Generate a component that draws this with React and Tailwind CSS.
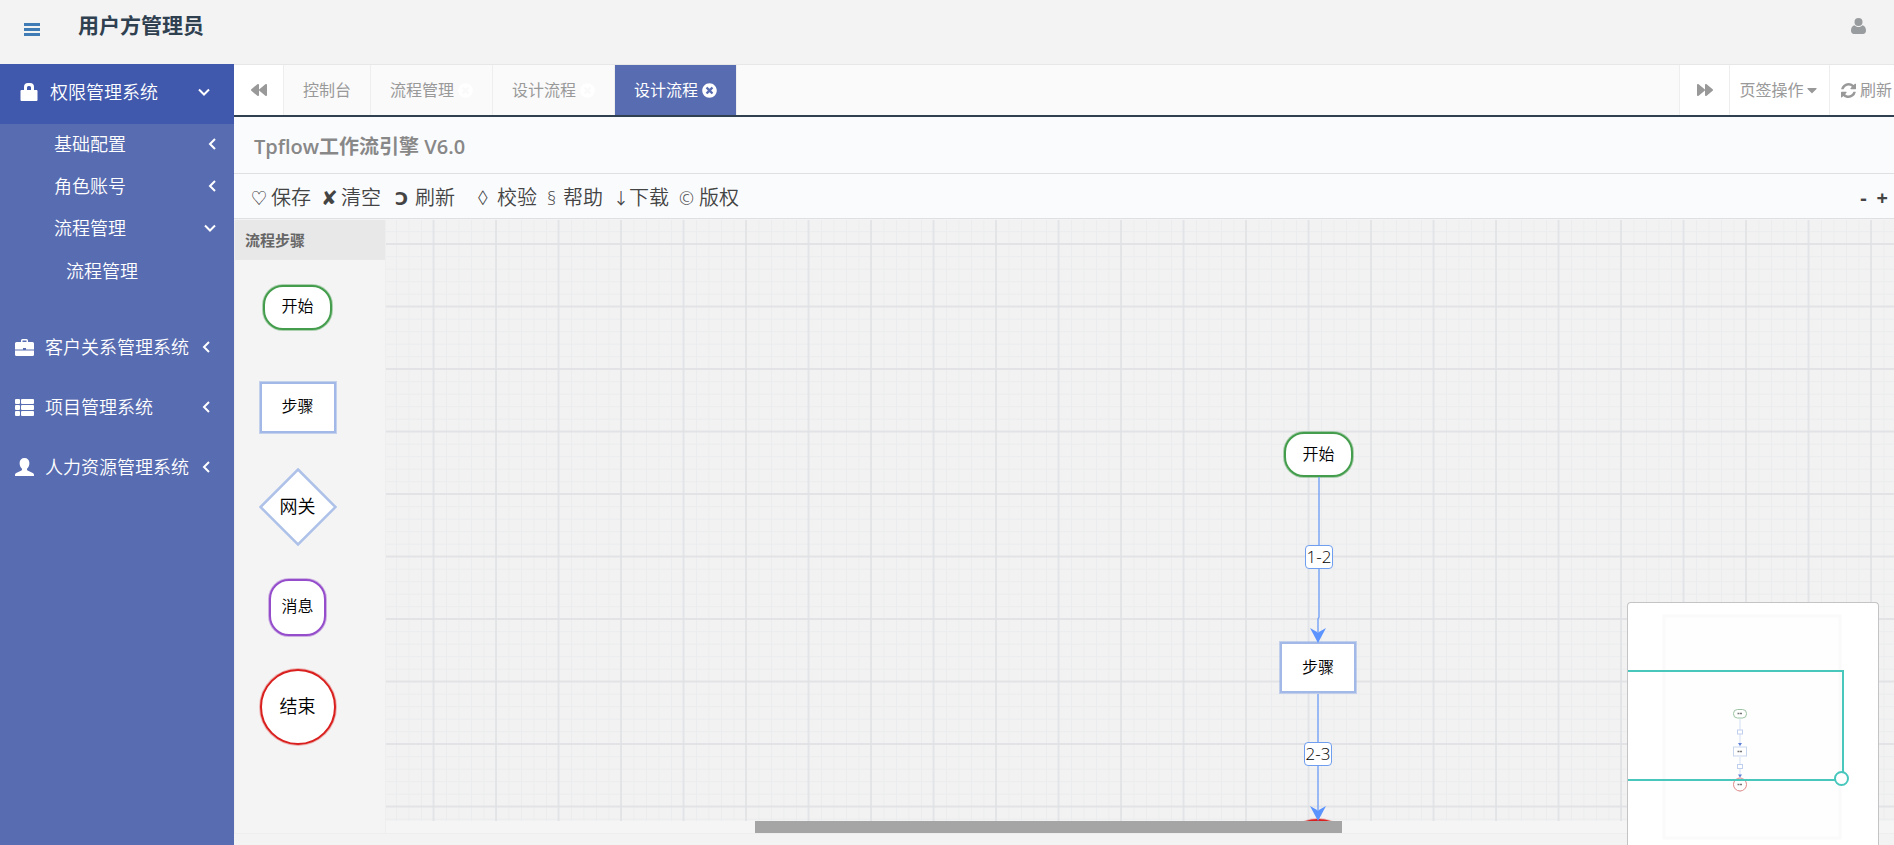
import React, { useState } from 'react';
import { FaBackward, FaForward, FaCaretDown, FaTimesCircle } from 'react-icons/fa';

const SUB_MENU = [
  { label: '基础配置', open: false },
  { label: '角色账号', open: false },
  { label: '流程管理', open: true, children: ['流程管理'] },
];

const SYSTEMS = [
  { label: '客户关系管理系统', icon: BriefcaseIcon },
  { label: '项目管理系统', icon: ListIcon },
  { label: '人力资源管理系统', icon: PersonIcon },
];

const TABS = [
  { id: 'home', label: '控制台' },
  { id: 'flow', label: '流程管理', closable: true },
  { id: 'design-1', label: '设计流程', closable: true },
  { id: 'design-2', label: '设计流程', closable: true },
];

const TOOLS = [
  { glyph: '♡', label: '保存', glyphClass: 'w-5 text-base' },
  { glyph: '✘', label: '清空', glyphClass: 'w-5 text-xl' },
  { glyph: 'Ↄ', label: '刷新', glyphClass: 'w-6 pl-1 text-lg font-bold', extra: 'mr-3' },
  { glyph: '◊', label: '校验', glyphClass: 'w-5 text-xl' },
  { glyph: '§', label: '帮助', glyphClass: 'w-4 text-lg' },
  { glyph: '↓', label: '下载', glyphClass: 'w-4 text-base' },
  { glyph: '©', label: '版权', glyphClass: 'w-5 text-lg' },
];

function LockIcon() {
  return (
    <svg width="18" height="18" viewBox="0 0 18 18" fill="currentColor">
      <path d="M4 7V4a4 4 0 0 1 4-4h2a4 4 0 0 1 4 4v3h2.500a1 1 0 0 1 1 1v9a1 1 0 0 1-1 1h-15a1 1 0 0 1-1-1V8a1 1 0 0 1 1-1zM7 7h4V4.500A1.500 1.500 0 0 0 9.500 3h-1A1.500 1.500 0 0 0 7 4.500z" />
    </svg>
  );
}

function BriefcaseIcon() {
  return (
    <svg width="19" height="17" viewBox="0 0 19 17" fill="currentColor">
      <path d="M6 3V1.500A1.500 1.500 0 0 1 7.500 0h4A1.500 1.500 0 0 1 13 1.500V3h4.500A1.500 1.500 0 0 1 19 4.500V10.500h-8V9H8v1.500H0v-6A1.500 1.500 0 0 1 1.500 3zM7.500 3h4V1.500h-4z" />
      <path d="M0 11.500h19v4a1.500 1.500 0 0 1-1.500 1.500h-16A1.500 1.500 0 0 1 0 15.500z" />
    </svg>
  );
}

function ListIcon() {
  return (
    <svg width="19" height="17" viewBox="0 0 19 17" fill="currentColor">
      {[0, 6, 12].map(y => (
        <React.Fragment key={y}>
          <rect x="0" y={y} width="5" height="5" rx="1" />
          <rect x="6" y={y} width="13" height="5" rx="1" />
        </React.Fragment>
      ))}
    </svg>
  );
}

function PersonIcon() {
  return (
    <svg width="19" height="18" viewBox="0 0 19 18" fill="currentColor">
      <path d="M9.500 0c3 0 4.900 2 4.900 5 0 2.400-.9 4.400-2.200 5.500-.4.500-.3 1.500.3 1.900l5.300 2.500c.8.400 1.200 1 1.200 1.800V18H0v-1.300c0-.8.4-1.400 1.200-1.800l5.300-2.500c.6-.4.700-1.400.3-1.900C5.500 9.400 4.600 7.400 4.600 5c0-3 1.900-5 4.900-5z" />
    </svg>
  );
}

function Chevron({ open }) {
  return (
    <svg width="12" height="12" viewBox="0 0 12 12" fill="none" stroke="currentColor" strokeWidth="2">
      <path d={open ? 'M1 3.500 6 8.500 11 3.500' : 'M9 1 4 6 9 11'} />
    </svg>
  );
}

function RefreshIcon() {
  return (
    <svg width="15" height="15" viewBox="0 0 1536 1536" fill="currentColor">
      <path d="M1511 928q0 5-1 7-64 268-268 434.500T764 1536q-146 0-282.500-55T238 1324l-129 129q-19 19-45 19t-45-19-19-45V960q0-26 19-45t45-19h448q26 0 45 19t19 45-19 45l-137 137q71 66 161 102t187 36q134 0 250-65t186-179q11-17 53-117 8-23 30-23h192q13 0 22.500 9.500t9.500 22.500zm25-800v448q0 26-19 45t-45 19h-448q-26 0-45-19t-19-45 19-45l138-138Q969 256 768 256q-134 0-250 65T332 500q-11 17-53 117-8 23-30 23H50q-13 0-22.500-9.500T18 608v-7q65-268 270-434.500T768 0q146 0 284 55.500T1297 212l130-129q19-19 45-19t45 19 19 45z" />
    </svg>
  );
}

function Sidebar() {
  return (
    <nav className="w-[234px] shrink-0 bg-[#586cb1] text-lg font-[350] text-white">
      <a href="#auth" className="flex h-[60px] items-center bg-[#4159ad] pr-6 pb-1 pl-5">
        <LockIcon />
        <span className="ml-3 flex-1">权限管理系统</span>
        <Chevron open />
      </a>
      <ul className="mb-[25px]">
        {SUB_MENU.map(item => (
          <li key={item.label}>
            <a href="#sub" className={`flex h-[42px] items-center pb-0.5 pl-[54px] ${item.open ? 'pr-[18px]' : 'pr-4'}`}>
              <span className="flex-1">{item.label}</span>
              <Chevron open={item.open} />
            </a>
            {item.children?.map(child => (
              <a key={child} href="#child" className="flex h-[42px] items-center pl-[66px]">{child}</a>
            ))}
          </li>
        ))}
      </ul>
      {SYSTEMS.map(({ label, icon: Icon }) => (
        <a key={label} href="#system" className="flex h-[60px] items-center pr-[22px] pl-[15px]">
          <Icon />
          <span className="ml-[11px] flex-1 whitespace-nowrap">{label}</span>
          <Chevron />
        </a>
      ))}
    </nav>
  );
}

function TabBar() {
  const [active, setActive] = useState('design-2');

  return (
    <div className="flex h-[53px] overflow-hidden border-t border-b-2 border-t-[#e7e7e7] border-b-[#2f4050] bg-[#fafafa] text-base text-[#999]">
      <button aria-label="向左" className="flex w-[50px] shrink-0 items-center justify-center border-r border-[#eee] bg-white">
        <FaBackward size={16} />
      </button>
      {TABS.map(tab => (
        <button key={tab.id} onClick={() => setActive(tab.id)}
          className={`flex shrink-0 items-center gap-1 border-r border-[#eee] px-[19px] ${active === tab.id ? 'bg-[#586cb1] text-white' : ''}`}>
          {tab.label}
          {tab.closable && <FaTimesCircle size={15} className="text-white" />}
        </button>
      ))}
      <div className="flex-1" />
      <button aria-label="向右" className="flex w-[51px] shrink-0 items-center justify-center border-x border-[#eee] bg-white">
        <FaForward size={16} />
      </button>
      <button className="flex w-[100px] shrink-0 items-center justify-center border-r border-[#eee] bg-white whitespace-nowrap">
        页签操作
        <FaCaretDown size={16} />
      </button>
      <button className="flex w-16 shrink-0 items-center gap-1 bg-white pl-[11px] whitespace-nowrap">
        <RefreshIcon />
        刷新
      </button>
    </div>
  );
}

function Toolbar() {
  return (
    <div className="flex h-[45px] items-center border-b border-[#dee0e3] bg-[#fafbfd] pt-1 pr-1.5 pl-[17px] text-xl text-[#444]">
      <div className="flex gap-2.5 font-[350]">
        {TOOLS.map(tool => (
          <button key={tool.label} className={`flex items-center whitespace-nowrap ${tool.extra || ''}`}>
            <span className={`text-left ${tool.glyphClass}`}>{tool.glyph}</span>
            {tool.label}
          </button>
        ))}
      </div>
      <div className="ml-auto flex gap-2.5 font-bold">
        <button>-</button>
        <button>+</button>
      </div>
    </div>
  );
}

function StartNode() {
  return (
    <div className="flex h-[45px] w-[69px] items-center justify-center rounded-[20px] border-2 border-[#449d4c] bg-white pb-0.5 ring-1 ring-[#449d4c]/40">开始</div>
  );
}

function StepNode() {
  return (
    <div className="flex h-[51px] w-[76px] items-center justify-center border-2 border-[#a2b9e8] bg-white pb-0.5 ring-1 ring-[#a2b9e8]/60">步骤</div>
  );
}

function GatewayNode() {
  return (
    <div className="relative flex size-[78px] items-center justify-center pb-0.5 text-lg">
      <svg className="absolute inset-0" width="78" height="78" viewBox="0 0 78 78">
        <path d="M39 1.500 76.500 39 39 76.500 1.500 39z" fill="#fff" stroke="#adc1e9" strokeWidth="2.500" />
      </svg>
      <span className="relative">网关</span>
    </div>
  );
}

function MessageNode() {
  return (
    <div className="flex size-[57px] items-center justify-center rounded-[20px] border-2 border-[#954dcb] bg-white pb-0.5 ring-1 ring-[#954dcb]/40">消息</div>
  );
}

function EndNode({ label }) {
  return (
    <div className="flex size-[76px] items-center justify-center rounded-full border-2 border-[#d9201e] bg-white pb-0.5 text-lg ring-1 ring-[#d9201e]/30">{label}</div>
  );
}

function Palette() {
  return (
    <aside className="w-[152px] shrink-0 border-x border-[#eee] bg-[#f4f4f4] text-base font-[350] text-black">
      <h2 className="flex h-10 items-center bg-[#e8e8e8] px-2.5 text-[15px] font-bold text-[#666]">流程步骤</h2>
      <ul className="-mt-[3px] w-[125px]">
        <li className="flex h-[100px] items-center justify-center"><StartNode /></li>
        <li className="flex h-[100px] items-center justify-center"><StepNode /></li>
        <li className="flex h-[100px] items-center justify-center"><GatewayNode /></li>
        <li className="flex h-[100px] items-center justify-center"><MessageNode /></li>
        <li className="flex h-[100px] items-center justify-center"><EndNode label="结束" /></li>
      </ul>
    </aside>
  );
}

function Grid() {
  return (
    <svg className="absolute inset-0 size-full">
      <defs>
        <pattern id="minor" width="12.5" height="12.5" x="47.5" y="23.7" patternUnits="userSpaceOnUse">
          <path d="M0 .5H12.5M.5 0V12.5" stroke="#ebecee" strokeWidth="1" />
        </pattern>
        <pattern id="major" width="62.5" height="62.5" x="46.500" y="23" patternUnits="userSpaceOnUse">
          <path d="M0 1H62.5M1 0V62.5" stroke="#dfe0e3" strokeWidth="1.400" />
        </pattern>
      </defs>
      <rect width="100%" height="100%" fill="url(#minor)" />
      <rect width="100%" height="100%" fill="url(#major)" />
    </svg>
  );
}

function Canvas() {
  return (
    <div className="relative flex-1 overflow-hidden bg-[#f2f2f2] text-base font-[350] text-black">
      <Grid />
      <div className="absolute top-[212px] left-[898px]"><StartNode /></div>
      <div className="absolute top-[422px] left-[894px]"><StepNode /></div>
      <div className="absolute top-[599px] left-[894px]"><EndNode /></div>
      <svg className="absolute top-0 left-[900px]" width="64" height="620" fill="none">
        <path d="M33 257V397L32 399V412M32 474V590" stroke="#7ba6f5" strokeWidth="1.500" />
        <path d="M24 408 32 412.500 40 408 32 423zM24 586 32 590.500 40 586 32 601z" fill="#5c94ff" />
      </svg>
      <span className="absolute top-[325px] left-[919px] flex h-6 w-7 items-center justify-center rounded-sm border border-[#6f9df0] bg-white text-[17px] whitespace-nowrap">1-2</span>
      <span className="absolute top-[522px] left-[918px] flex h-6 w-7 items-center justify-center rounded-sm border border-[#6f9df0] bg-white text-[17px] whitespace-nowrap">2-3</span>
    </div>
  );
}

function MiniMap() {
  return (
    <div className="absolute right-[15px] bottom-0 h-[243px] w-[252px] overflow-hidden rounded-t border border-b-0 border-[#c4c4c6] bg-white">
      <svg width="250" height="242" viewBox="0 0 250 242" fill="none">
        <rect x="36" y="13" width="176" height="222" fill="#fefefe" stroke="#fafafa" strokeWidth="3" />
        <path d="M112 116V146M112 154V189" stroke="#d5e0f5" />
        <path d="M110 140h4l-2 3zM110 171.500h4l-2 3z" fill="#5c80d8" />
        <rect x="105.500" y="106.500" width="13" height="8.500" rx="4" fill="#fff" stroke="#9cc4a2" />
        <rect x="105.500" y="144" width="13" height="9" fill="#fff" stroke="#c9d5ed" />
        <rect x="109.500" y="127" width="5" height="4" fill="#fff" stroke="#c0cfee" />
        <rect x="109.500" y="161.500" width="5" height="4" fill="#fff" stroke="#c0cfee" />
        <circle cx="112" cy="181.500" r="6.500" fill="#fff" stroke="#e08a88" />
        <path d="M109.500 110.500h5M109.500 148.500h5M109.500 181.500h5" stroke="#777" strokeWidth="1.500" strokeDasharray="2 .5" />
        <path d="M0 68H215V177H0" stroke="#48c7bd" strokeWidth="2" />
        <circle cx="213.500" cy="175.500" r="6.500" fill="#fff" stroke="#48c7bd" strokeWidth="2" />
      </svg>
    </div>
  );
}

export default function App() {
  return (
    <div className="flex h-screen flex-col overflow-hidden bg-[#f3f3f3] font-['Open_Sans','Noto_Sans_CJK_SC','DejaVu_Sans',sans-serif]">
      <header className="flex h-16 shrink-0 items-center pr-7 pl-6">
        <button aria-label="菜单" className="pb-1.5 text-[#3f7cb5]">
          <svg width="16" height="13" viewBox="0 0 16 13" fill="currentColor">
            <path d="M0 0h16v3H0zM0 5h16v3H0zM0 10h16v3H0z" />
          </svg>
        </button>
        <h1 className="ml-[38px] pb-3 text-[21px] font-bold text-[#2f4050]">用户方管理员</h1>
        <a href="#user" aria-label="用户" className="ml-auto pb-3 text-[#999c9e]">
          <svg width="15" height="16" viewBox="0 0 15 16" fill="currentColor">
            <circle cx="7.500" cy="4" r="4" />
            <path d="M3.500 7.200C1 7.600 0 10 0 12.800 0 14.800 1.200 16 3 16h9c1.800 0 3-1.200 3-3.200 0-2.800-1-5.200-3.500-5.600C10.500 8.400 9 9 7.500 9s-3-.6-4-1.800z" />
          </svg>
        </a>
      </header>

      <div className="flex min-h-0 flex-1">
        <Sidebar />

        <main className="relative flex min-w-0 flex-1 flex-col">
          <TabBar />
          <h2 className="flex h-[57px] shrink-0 items-center border-b border-[#dee0e3] bg-[#fafbfd] px-5 pt-1 text-xl font-semibold text-[#888]">Tpflow工作流引擎 V6.0</h2>
          <Toolbar />

          {/* Designer */}
          <div className="mb-[11px] flex min-h-0 flex-1 border-b border-[#eee] pt-px">
            <Palette />
            <div className="flex min-w-0 flex-1 flex-col">
              <Canvas />
              <div className="h-3 shrink-0 bg-[#f5f5f5]">
                <div className="ml-[369px] h-3 w-[587px] bg-[#a5a5a5]" />
              </div>
            </div>
          </div>

          <MiniMap />
        </main>
      </div>
    </div>
  );
}
